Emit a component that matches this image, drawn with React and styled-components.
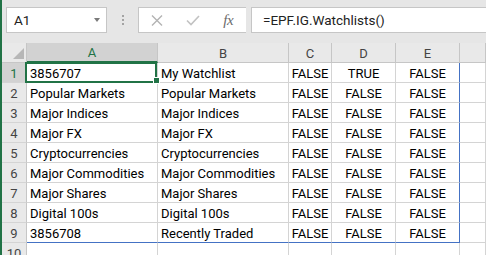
import React from 'react';
import styled, { createGlobalStyle, css } from 'styled-components';

const GlobalStyle = createGlobalStyle`
  html, body {
    margin: 0;
    padding: 0;
    background: #ffffff;
    overflow: hidden;
  }
  body {
    font-family: Roboto, "Liberation Sans", sans-serif;
  }
`;

const GREEN = '#217346';
const SPILL = '#4472c4';

const Window = styled.div`
  width: 486px;
  height: 255px;
  box-sizing: border-box;
  border-left: 2px solid ${GREEN};
  display: flex;
  flex-direction: column;
  overflow: hidden;
  background: #ffffff;
`;

/* ---------- formula bar ---------- */

const Toolbar = styled.div`
  height: 43px;
  flex: none;
  box-sizing: border-box;
  padding: 7px 0 0 4px;
  display: flex;
  align-items: flex-start;
  background: #e6e6e6;
`;

const NameBox = styled.div`
  width: 101px;
  height: 26px;
  box-sizing: border-box;
  border: 1px solid #c6c6c6;
  background: #ffffff;
  display: flex;
  align-items: center;
  padding: 0 6px 0 7px;
  font-size: 13.5px;
  color: #222;
`;

const DropArrow = styled.span`
  margin-left: auto;
  width: 0;
  height: 0;
  border-left: 3.5px solid transparent;
  border-right: 3.5px solid transparent;
  border-top: 4px solid #7a7a7a;
`;

const Grip = styled.div`
  width: 31px;
  height: 26px;
  display: flex;
  flex-direction: column;
  align-items: center;
  justify-content: center;
  gap: 2px;
`;

const GripDot = styled.span`
  width: 2px;
  height: 2px;
  background: #a3a3a3;
`;

const ButtonBox = styled.div`
  width: 108px;
  height: 26px;
  box-sizing: border-box;
  border: 1px solid #c6c6c6;
  border-right: none;
  background: #ffffff;
  display: flex;
`;

const ToolButton = styled.div`
  width: 36px;
  display: flex;
  align-items: center;
  justify-content: center;
`;

const FxLabel = styled.span`
  font-family: "Liberation Serif", "DejaVu Serif", serif;
  font-style: italic;
  font-size: 15px;
  color: #6b6b6b;
  letter-spacing: -0.5px;
`;

const FormulaInput = styled.div`
  flex: 1;
  height: 26px;
  margin-left: 5px;
  box-sizing: border-box;
  border: 1px solid #c6c6c6;
  border-right: none;
  background: #ffffff;
  display: flex;
  align-items: center;
  padding-left: 11px;
  font-size: 13.5px;
  color: #222;
`;

/* ---------- sheet grid ---------- */

const Sheet = styled.div`
  display: grid;
  grid-template-columns: 25px 131px 131px 43px 64px 64px 1fr;
  grid-auto-rows: 20px;
  font-size: 13px;
`;

const HeadBase = styled.div`
  box-sizing: border-box;
  display: flex;
  align-items: center;
  justify-content: center;
  background: #e9e9e9;
  color: #444;
  border-right: 1px solid #c6c6c6;
  border-bottom: 1px solid #c6c6c6;
`;

const Corner = styled(HeadBase)`
  align-items: flex-end;
  justify-content: flex-end;
  padding: 0 2px 3px 0;
`;

const CornerTriangle = styled.span`
  width: 0;
  height: 0;
  border-left: 11px solid transparent;
  border-bottom: 11px solid #b7b7b7;
`;

const ColHead = styled(HeadBase)`
  padding-top: 1px;
  ${({ $selected }) => $selected && css`
    background: #d2d2d2;
    color: ${GREEN};
    border-bottom: 2px solid ${GREEN};
  `}
`;

const RowHead = styled(HeadBase)`
  padding-top: 2px;
  border-bottom-color: #d4d4d4;
  ${({ $selected }) => $selected && css`
    background: #d2d2d2;
    color: ${GREEN};
  `}
`;

const Cell = styled.div`
  position: relative;
  box-sizing: border-box;
  display: flex;
  align-items: flex-end;
  justify-content: ${({ $center }) => ($center ? 'center' : 'flex-start')};
  padding: 0 3px 2px;
  line-height: 13px;
  color: #000;
  white-space: nowrap;
  overflow: hidden;
  border-right: 1px solid ${({ $spillRight }) => ($spillRight ? SPILL : '#d4d4d4')};
  border-bottom: 1px solid ${({ $spillBottom }) => ($spillBottom ? SPILL : '#d4d4d4')};

  ${({ $active }) => $active && css`
    overflow: visible;
    z-index: 2;
    &::before {
      content: '';
      position: absolute;
      top: -1px;
      left: -2px;
      right: 0;
      bottom: -1px;
      border: 2px solid ${GREEN};
    }
    &::after {
      content: '';
      position: absolute;
      right: -3px;
      bottom: -2px;
      width: 5px;
      height: 5px;
      background: ${GREEN};
      border: 1px solid #ffffff;
    }
  `}
`;

const columns = ['A', 'B', 'C', 'D', 'E', ''];

const rows = [
  ['3856707', 'My Watchlist', 'FALSE', 'TRUE', 'FALSE'],
  ['Popular Markets', 'Popular Markets', 'FALSE', 'FALSE', 'FALSE'],
  ['Major Indices', 'Major Indices', 'FALSE', 'FALSE', 'FALSE'],
  ['Major FX', 'Major FX', 'FALSE', 'FALSE', 'FALSE'],
  ['Cryptocurrencies', 'Cryptocurrencies', 'FALSE', 'FALSE', 'FALSE'],
  ['Major Commodities', 'Major Commodities', 'FALSE', 'FALSE', 'FALSE'],
  ['Major Shares', 'Major Shares', 'FALSE', 'FALSE', 'FALSE'],
  ['Digital 100s', 'Digital 100s', 'FALSE', 'FALSE', 'FALSE'],
  ['3856708', 'Recently Traded', 'FALSE', 'FALSE', 'FALSE'],
  ['', '', '', '', ''],
];

const CloseIcon = () => (
  <svg width="12" height="11" viewBox="0 0 12 11">
    <path d="M1 0.5 L11 10.5 M11 0.5 L1 10.5" stroke="#b3b3b3" strokeWidth="1.4" fill="none" />
  </svg>
);

const CheckIcon = () => (
  <svg width="14" height="11" viewBox="0 0 14 11">
    <path d="M1 5.5 L5 9.5 L13 1" stroke="#c2c2c2" strokeWidth="1.6" fill="none" />
  </svg>
);

const App = () => {
  return (
    <>
      <GlobalStyle />
      <Window>
        <Toolbar>
          <NameBox>
            A1
            <DropArrow />
          </NameBox>
          <Grip>
            <GripDot />
            <GripDot />
            <GripDot />
          </Grip>
          <ButtonBox>
            <ToolButton><CloseIcon /></ToolButton>
            <ToolButton><CheckIcon /></ToolButton>
            <ToolButton><FxLabel>fx</FxLabel></ToolButton>
          </ButtonBox>
          <FormulaInput>=EPF.IG.Watchlists()</FormulaInput>
        </Toolbar>

        <Sheet>
          <Corner><CornerTriangle /></Corner>
          {columns.map((c, i) => (
            <ColHead key={`h${i}`} $selected={i === 0}>{c}</ColHead>
          ))}

          {rows.map((row, r) => (
            <React.Fragment key={r}>
              <RowHead $selected={r === 0}>{r + 1}</RowHead>
              {row.map((value, c) => (
                <Cell
                  key={c}
                  $center={c >= 2}
                  $active={r === 0 && c === 0}
                  $spillRight={c === 4 && r < 9}
                  $spillBottom={r === 8}
                >
                  {value}
                </Cell>
              ))}
              <Cell />
            </React.Fragment>
          ))}
        </Sheet>
      </Window>
    </>
  );
};

export default App;
